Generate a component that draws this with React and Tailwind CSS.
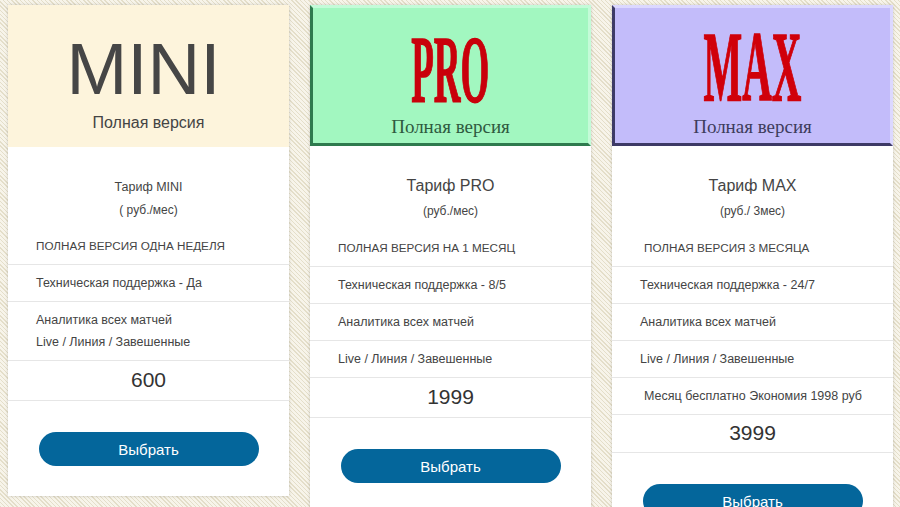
import React from "react";

const sans = "font-['Liberation_Sans',Arial,sans-serif]";
const serif = "font-['Liberation_Serif','Times_New_Roman',serif]";

function Row({ children, indent = false, h = "h-[37px]", lead = "leading-[16px]", size = "text-[12.5px]" }) {
  return (
    <div
      className={`${h} flex items-center border-b border-[#e6e6e6] ${size} text-[#444] ${lead} ${
        indent ? "pl-[32px]" : "pl-[28px]"
      } pr-[10px]`}
    >
      <div>{children}</div>
    </div>
  );
}

function Button() {
  return (
    <div className="pt-[31px] pb-[30px] flex justify-center">
      <button className="w-[220px] h-[34px] rounded-full bg-[#04669b] text-white text-[15px] leading-none">
        Выбрать
      </button>
    </div>
  );
}

function Price({ children, h = "h-[40px]" }) {
  return (
    <div className={`${h} flex items-center justify-center border-b border-[#e6e6e6] text-[21px] text-[#333] pb-[2px]`}>
      {children}
    </div>
  );
}

export default function App() {
  return (
    <div
      className={`${sans} w-[900px] h-[507px] overflow-hidden bg-[repeating-linear-gradient(45deg,#e4dec9_0px,#e4dec9_1px,#f7f4ea_1px,#f7f4ea_3px)]`}
    >
      <div className="flex items-start gap-[21px] pl-[8px] pt-[5px]">
        {/* MINI */}
        <div className="w-[281px] bg-white shadow-[0_0_3px_rgba(0,0,0,0.18)]">
          <div className="h-[142px] bg-[#fdf4dc] flex flex-col items-center pt-[24px]">
            <div className={`${sans} text-[73px] leading-[80px] text-[#464646] pr-[10px]`}>MINI</div>
            <div className="text-[16px] leading-[20px] text-[#444] mt-[4px]">Полная версия</div>
          </div>
          <div className="pt-[30px] pb-[9px] text-center text-[#444]">
            <div className="text-[12.5px] leading-[20px]">Тариф MINI</div>
            <div className="text-[12px] leading-[18px] mt-[4px]">( руб./мес)</div>
          </div>
          <Row size="text-[11.7px]">ПОЛНАЯ ВЕРСИЯ ОДНА НЕДЕЛЯ</Row>
          <Row>Техническая поддержка - Да</Row>
          <Row h="h-[59px]" lead="leading-[22px]">
            Аналитика всех матчей
            <br />
            Live / Линия / Завешенные
          </Row>
          <Price>600</Price>
          <Button />
        </div>

        {/* PRO */}
        <div className="w-[281px] bg-white shadow-[0_0_3px_rgba(0,0,0,0.18)]">
          <div className="h-[141px] bg-[#a2f7c0] border-[3px] border-t-[#c4fbd8] border-r-[#c4fbd8] border-b-[#2e7a4e] border-l-[#2e7a4e] flex flex-col items-center pt-[26px]">
            <div
              className={`${serif} font-bold text-[95px] leading-[72px] text-[#c9000b] scale-x-[0.39] [-webkit-text-stroke:1.5px_#c9000b]`}
            >
              PRO
            </div>
            <div className={`${serif} text-[19px] leading-[22px] text-[#2f5a3f] mt-[10px]`}>Полная версия</div>
          </div>
          <div className="pt-[28px] pb-[10px] text-center text-[#444]">
            <div className="text-[16px] leading-[24px]">Тариф PRO</div>
            <div className="text-[12px] leading-[18px] mt-[4px]">(руб./мес)</div>
          </div>
          <Row size="text-[11.7px]">ПОЛНАЯ ВЕРСИЯ НА 1 МЕСЯЦ</Row>
          <Row>Техническая поддержка - 8/5</Row>
          <Row>Аналитика всех матчей</Row>
          <Row>Live / Линия / Завешенные</Row>
          <Price>1999</Price>
          <Button />
        </div>

        {/* MAX */}
        <div className="w-[281px] bg-white shadow-[0_0_3px_rgba(0,0,0,0.18)]">
          <div className="h-[141px] bg-[#c3bcfa] border-[3px] border-t-[#dcd8ff] border-r-[#dcd8ff] border-b-[#3d3a66] border-l-[#3d3a66] flex flex-col items-center pt-[23px]">
            <div
              className={`${serif} font-bold text-[100px] leading-[72px] text-[#d0000a] scale-x-[0.41] [-webkit-text-stroke:1.5px_#d0000a]`}
            >
              MAX
            </div>
            <div className={`${serif} text-[19px] leading-[22px] text-[#3e3c5c] mt-[13px]`}>Полная версия</div>
          </div>
          <div className="pt-[28px] pb-[10px] text-center text-[#444]">
            <div className="text-[16px] leading-[24px]">Тариф MAX</div>
            <div className="text-[12px] leading-[18px] mt-[4px]">(руб./ 3мес)</div>
          </div>
          <Row indent size="text-[11.7px]">ПОЛНАЯ ВЕРСИЯ 3 МЕСЯЦА</Row>
          <Row>Техническая поддержка - 24/7</Row>
          <Row>Аналитика всех матчей</Row>
          <Row>Live / Линия / Завешенные</Row>
          <Row indent>Месяц бесплатно Экономия 1998 руб</Row>
          <Price h="h-[38px]">3999</Price>
          <Button />
        </div>
      </div>
    </div>
  );
}
